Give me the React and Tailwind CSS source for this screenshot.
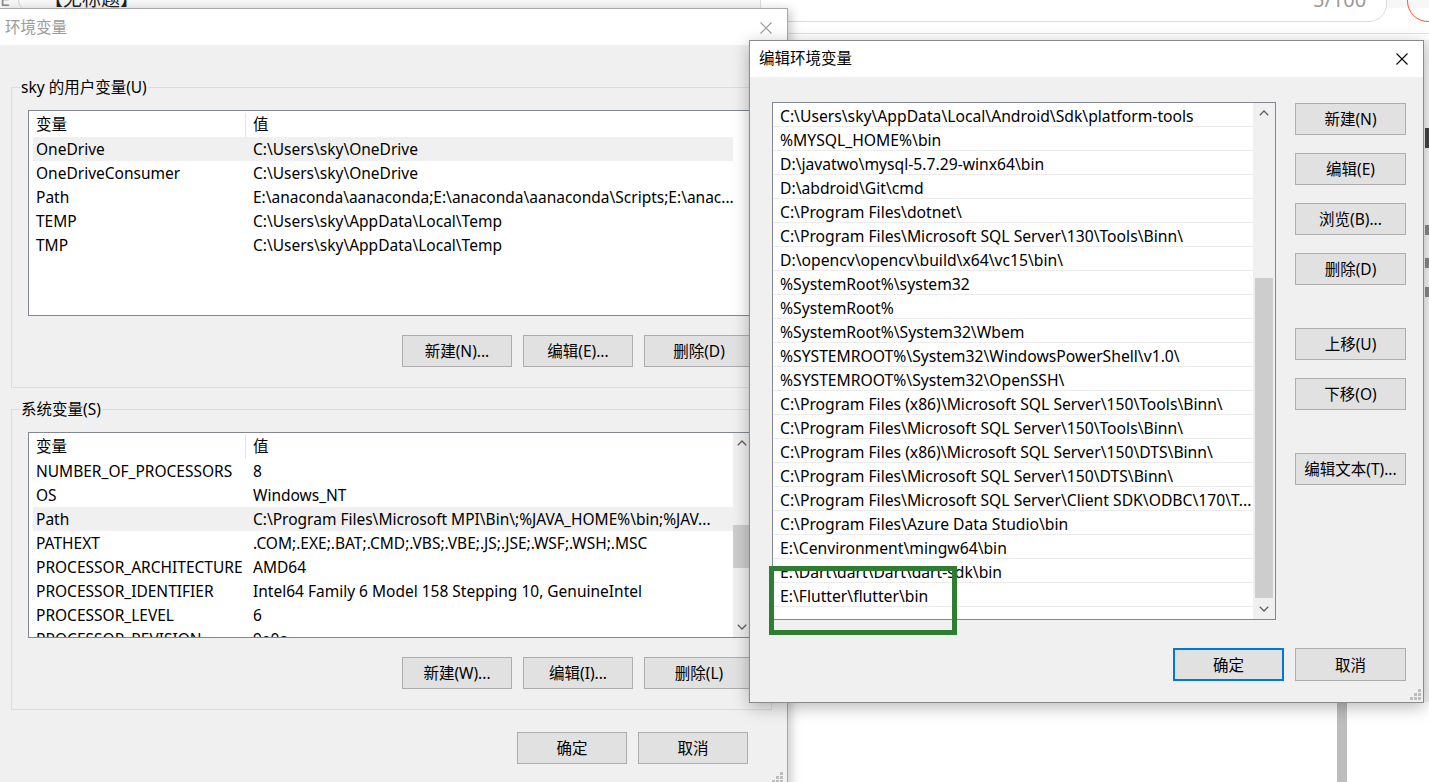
import React from "react";

const userVars = [
  ["OneDrive", "C:\\Users\\sky\\OneDrive", true],
  ["OneDriveConsumer", "C:\\Users\\sky\\OneDrive"],
  ["Path", "E:\\anaconda\\aanaconda;E:\\anaconda\\aanaconda\\Scripts;E:\\anac..."],
  ["TEMP", "C:\\Users\\sky\\AppData\\Local\\Temp"],
  ["TMP", "C:\\Users\\sky\\AppData\\Local\\Temp"],
];

const sysVars = [
  ["NUMBER_OF_PROCESSORS", "8"],
  ["OS", "Windows_NT"],
  ["Path", "C:\\Program Files\\Microsoft MPI\\Bin\\;%JAVA_HOME%\\bin;%JAV...", true],
  ["PATHEXT", ".COM;.EXE;.BAT;.CMD;.VBS;.VBE;.JS;.JSE;.WSF;.WSH;.MSC"],
  ["PROCESSOR_ARCHITECTURE", "AMD64"],
  ["PROCESSOR_IDENTIFIER", "Intel64 Family 6 Model 158 Stepping 10, GenuineIntel"],
  ["PROCESSOR_LEVEL", "6"],
  ["PROCESSOR_REVISION", "9e0a"],
];

const paths = [
  "C:\\Users\\sky\\AppData\\Local\\Android\\Sdk\\platform-tools",
  "%MYSQL_HOME%\\bin",
  "D:\\javatwo\\mysql-5.7.29-winx64\\bin",
  "D:\\abdroid\\Git\\cmd",
  "C:\\Program Files\\dotnet\\",
  "C:\\Program Files\\Microsoft SQL Server\\130\\Tools\\Binn\\",
  "D:\\opencv\\opencv\\build\\x64\\vc15\\bin\\",
  "%SystemRoot%\\system32",
  "%SystemRoot%",
  "%SystemRoot%\\System32\\Wbem",
  "%SYSTEMROOT%\\System32\\WindowsPowerShell\\v1.0\\",
  "%SYSTEMROOT%\\System32\\OpenSSH\\",
  "C:\\Program Files (x86)\\Microsoft SQL Server\\150\\Tools\\Binn\\",
  "C:\\Program Files\\Microsoft SQL Server\\150\\Tools\\Binn\\",
  "C:\\Program Files (x86)\\Microsoft SQL Server\\150\\DTS\\Binn\\",
  "C:\\Program Files\\Microsoft SQL Server\\150\\DTS\\Binn\\",
  "C:\\Program Files\\Microsoft SQL Server\\Client SDK\\ODBC\\170\\T...",
  "C:\\Program Files\\Azure Data Studio\\bin",
  "E:\\Cenvironment\\mingw64\\bin",
  "E:\\Dart\\dart\\Dart\\dart-sdk\\bin",
  "E:\\Flutter\\flutter\\bin",
  "",
];

function ChevUp() {
  return (
    <svg width="10" height="6" viewBox="0 0 10 6">
      <path d="M0.8 5.2 L5 1 L9.2 5.2" fill="none" stroke="#606060" strokeWidth="1.3" />
    </svg>
  );
}
function ChevDown() {
  return (
    <svg width="10" height="6" viewBox="0 0 10 6">
      <path d="M0.8 0.8 L5 5 L9.2 0.8" fill="none" stroke="#606060" strokeWidth="1.3" />
    </svg>
  );
}
function CloseX({ color }) {
  return (
    <svg width="12" height="12" viewBox="0 0 12 12">
      <path d="M0.5 0.5 L11.5 11.5 M11.5 0.5 L0.5 11.5" stroke={color} strokeWidth="1.1" />
    </svg>
  );
}
function Grip() {
  return (
    <svg width="11" height="11" viewBox="0 0 11 11">
      <g fill="#bdbdbd">
        <rect x="8" y="0" width="3" height="3" />
        <rect x="8" y="4" width="3" height="3" />
        <rect x="4" y="4" width="3" height="3" />
        <rect x="8" y="8" width="3" height="3" />
        <rect x="4" y="8" width="3" height="3" />
        <rect x="0" y="8" width="3" height="3" />
      </g>
    </svg>
  );
}

function Btn({ children }) {
  return (
    <div className="h-[32px] w-[110px] shrink-0 flex items-center justify-center bg-[#e1e1e1] border border-[#adadad] leading-[20px]">
      {children}
    </div>
  );
}

function VarList({ rows, scroll }) {
  return (
    <div className="w-[727px] h-[206px] border border-[#828790] bg-white flex overflow-hidden">
      <div className="w-[704px] pl-[4px] flex flex-col">
        <div className="h-[26px] shrink-0 flex items-center pt-[2px]">
          <div className="w-[213px] h-full flex items-center pl-[3px] border-r border-[#e5e5e5]">变量</div>
          <div className="pl-[7px]">值</div>
        </div>
        {rows.map(([k, v, sel], i) => (
          <div
            key={i}
            className={`h-[24px] shrink-0 flex items-center pt-[2px] whitespace-nowrap ${sel ? "bg-[#f0f0f0]" : ""}`}
          >
            <div className="w-[213px] pl-[3px] overflow-hidden">{k}</div>
            <div className="w-[487px] pl-[7px] overflow-hidden">{v}</div>
          </div>
        ))}
      </div>
      {scroll && (
        <div className="w-[17px] h-full bg-[#f0f0f0] flex flex-col items-center">
          <div className="h-[20px] flex items-center justify-center">
            <ChevUp />
          </div>
          <div className="flex-1 w-full">
            <div className="mt-[72px] h-[43px] w-full bg-[#cdcdcd]" />
          </div>
          <div className="h-[20px] flex items-center justify-center">
            <ChevDown />
          </div>
        </div>
      )}
    </div>
  );
}

function Group({ label, rows, scroll, buttons }) {
  return (
    <div className="relative ml-[11px] w-[761px] h-[301px] border border-[#dcdcdc] pt-[22px] pl-[16px] pr-[17px] flex flex-col">
      <div className="absolute left-[8px] -top-[11px] px-[1px] bg-[#f0f0f0] leading-[20px]">{label}</div>
      <VarList rows={rows} scroll={scroll} />
      <div className="mt-[19px] flex justify-end gap-[11px]">
        {buttons.map((b) => (
          <Btn key={b}>{b}</Btn>
        ))}
      </div>
    </div>
  );
}

function EnvDialog() {
  return (
    <div className="absolute left-0 top-[8px] w-[788px] h-[800px] bg-[#f0f0f0] border-t border-r border-[#a8a8a8] shadow-[3px_2px_10px_rgba(0,0,0,0.22)] flex flex-col">
      <div className="h-[36px] bg-white flex items-center justify-between pl-[5px] pr-[15px] pt-[2px] shrink-0">
        <span className="text-[#9a9a9a]">环境变量</span>
        <CloseX color="#9a9a9a" />
      </div>
      <div className="flex flex-col pt-[42px]">
        <Group label="sky 的用户变量(U)" rows={userVars} buttons={["新建(N)...", "编辑(E)...", "删除(D)"]} />
        <div className="h-[21px]" />
        <Group label="系统变量(S)" rows={sysVars} scroll buttons={["新建(W)...", "编辑(I)...", "删除(L)"]} />
        <div className="mt-[22px] flex justify-end gap-[11px] pr-[39px]">
          <Btn>确定</Btn>
          <Btn>取消</Btn>
        </div>
      </div>
      <div className="absolute left-[772px] top-[763px]">
        <Grip />
      </div>
    </div>
  );
}

function SideBtn({ children, className = "" }) {
  return (
    <div className={`h-[32px] w-[111px] shrink-0 flex items-center justify-center bg-[#e1e1e1] border border-[#adadad] leading-[20px] ${className}`}>
      {children}
    </div>
  );
}

function EditDialog() {
  return (
    <div className="absolute left-[749px] top-[40px] w-[675px] h-[663px] bg-[#f0f0f0] border border-[#8a8a8a] shadow-[0_4px_16px_rgba(0,0,0,0.28)] flex flex-col">
      <div className="h-[36px] bg-white flex items-center justify-between pl-[9px] pr-[15px] shrink-0">
        <span>编辑环境变量</span>
        <CloseX color="#000" />
      </div>
      <div className="flex pl-[22px] pt-[25px]">
        <div className="w-[504px] h-[518px] border border-[#828790] bg-white flex overflow-hidden">
          <div className="w-[480px] flex flex-col text-[15.7px]">
            {paths.map((p, i) => (
              <div
                key={i}
                className="h-[24px] shrink-0 border-b border-[#ececec] pl-[7px] pt-[5px] flex items-center whitespace-nowrap overflow-hidden"
              >
                {p}
              </div>
            ))}
          </div>
          <div className="w-[22px] h-full bg-[#f0f0f0] flex flex-col items-center">
            <div className="h-[20px] shrink-0 flex items-center justify-center">
              <ChevUp />
            </div>
            <div className="flex-1 w-full px-[2px]">
              <div className="mt-[155px] h-[320px] w-full bg-[#cdcdcd]" />
            </div>
            <div className="h-[20px] shrink-0 flex items-center justify-center">
              <ChevDown />
            </div>
          </div>
        </div>
        <div className="ml-[19px] flex flex-col pt-[1px]">
          <SideBtn>新建(N)</SideBtn>
          <SideBtn className="mt-[18px]">编辑(E)</SideBtn>
          <SideBtn className="mt-[18px]">浏览(B)...</SideBtn>
          <SideBtn className="mt-[18px]">删除(D)</SideBtn>
          <SideBtn className="mt-[43px]">上移(U)</SideBtn>
          <SideBtn className="mt-[18px]">下移(O)</SideBtn>
          <SideBtn className="mt-[43px]">编辑文本(T)...</SideBtn>
        </div>
      </div>
      <div className="mt-[28px] flex justify-end gap-[11px] pr-[17px]">
        <div className="h-[33px] w-[111px] flex items-center justify-center bg-[#e1e1e1] border-2 border-[#0078d7] leading-[20px]">
          确定
        </div>
        <div className="h-[33px] w-[111px] flex items-center justify-center bg-[#e1e1e1] border border-[#adadad] leading-[20px]">
          取消
        </div>
      </div>
      <div className="absolute left-[660px] top-[648px]">
        <Grip />
      </div>
    </div>
  );
}

function BackgroundPage() {
  return (
    <div className="absolute inset-0 bg-white">
      <div className="h-[8px] bg-[#f7f7f7] flex items-start overflow-hidden relative">
        <span className="absolute left-0 -top-[12px] text-[18px] leading-[22px] text-[#888]">E</span>
        <div className="absolute left-[18px] -top-[20px] w-[20px] h-[30px] rounded-l-[10px] border-l border-[#d0d0d0]" />
        <span className="absolute left-[44px] -top-[13px] text-[19px] leading-[24px] text-[#222]">【无标题】</span>
      </div>
      <div className="absolute left-[760px] -top-[20px] w-[627px] h-[42px] rounded-[18px] border border-[#dcdcdc] bg-white">
        <span className="absolute left-[552px] top-[7px] text-[20px] leading-[24px] text-[#999]">5/100</span>
      </div>
      <div className="absolute left-[1407px] -top-[20px] w-[42px] h-[42px] rounded-full border border-[#fc5531]" />
      <div className="absolute left-[786px] top-[33px] right-0 h-px bg-[#e4e4e4]" />
      <div className="absolute left-[1337px] top-[600px] w-[10px] h-[200px] bg-[#bdbdbd]" />
      <div className="absolute left-[1424px] top-[40px] w-[5px] h-[662px] bg-[#f4f4f4]" />
      <div className="absolute left-[1425px] top-[128px] w-[4px] h-[20px] bg-[#444]" />
      <div className="absolute left-[1425px] top-[225px] w-[4px] h-[10px] bg-[#888]" />
      <div className="absolute left-[1425px] top-[258px] w-[4px] h-[10px] bg-[#888]" />
      <div className="absolute left-[1425px] top-[287px] w-[4px] h-[10px] bg-[#888]" />
    </div>
  );
}

export default function App() {
  return (
    <div className="relative w-[1429px] h-[782px] overflow-hidden bg-white text-[15.5px] text-black font-['Noto_Sans','Noto_Sans_CJK_SC',sans-serif]">
      <BackgroundPage />
      <EnvDialog />
      <EditDialog />
      <div className="absolute left-[769px] top-[566px] w-[188px] h-[69px] border-[5px] border-[#2e7d32]" />
    </div>
  );
}
